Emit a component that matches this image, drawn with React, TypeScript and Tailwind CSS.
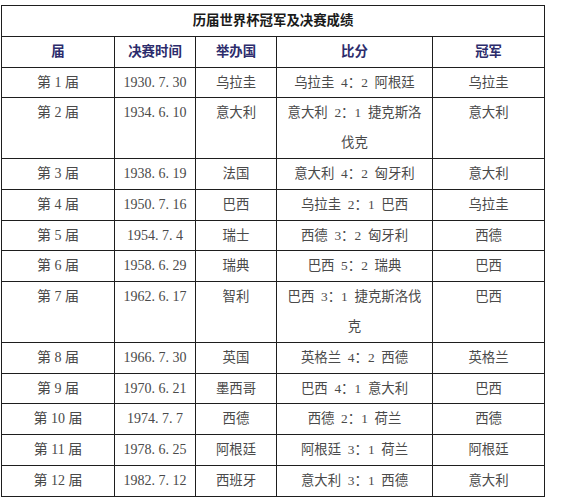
// World Cup finals history table
type Row = { no: string; date: string; host: string; score: string; champ: string }

const rows: Row[] = [
  { no: '第 1 届', date: '1930.7.30', host: '乌拉圭', score: '乌拉圭 4：2 阿根廷', champ: '乌拉圭' },
  { no: '第 2 届', date: '1934.6.10', host: '意大利', score: '意大利 2：1 捷克斯洛伐克', champ: '意大利' },
  { no: '第 3 届', date: '1938.6.19', host: '法国', score: '意大利 4：2 匈牙利', champ: '意大利' },
  { no: '第 4 届', date: '1950.7.16', host: '巴西', score: '乌拉圭 2：1 巴西', champ: '乌拉圭' },
  { no: '第 5 届', date: '1954.7.4', host: '瑞士', score: '西德 3：2 匈牙利', champ: '西德' },
  { no: '第 6 届', date: '1958.6.29', host: '瑞典', score: '巴西 5：2 瑞典', champ: '巴西' },
  { no: '第 7 届', date: '1962.6.17', host: '智利', score: '巴西 3：1 捷克斯洛伐克', champ: '巴西' },
  { no: '第 8 届', date: '1966.7.30', host: '英国', score: '英格兰 4：2 西德', champ: '英格兰' },
  { no: '第 9 届', date: '1970.6.21', host: '墨西哥', score: '巴西 4：1 意大利', champ: '巴西' },
  { no: '第 10 届', date: '1974.7.7', host: '西德', score: '西德 2：1 荷兰', champ: '西德' },
  { no: '第 11 届', date: '1978.6.25', host: '阿根廷', score: '阿根廷 3：1 荷兰', champ: '阿根廷' },
  { no: '第 12 届', date: '1982.7.12', host: '西班牙', score: '意大利 3：1 西德', champ: '意大利' },
]

// SimSun-style half-width period
function DateText({ value }: { value: string }) {
  const parts = value.split('.')
  return (
    <>
      {parts.map((p, i) => (
        <span key={i}>
          {p}
          {i < parts.length - 1 && <span className="inline-block w-[0.5em] text-left">.</span>}
        </span>
      ))}
    </>
  )
}

const cell = 'border border-[#1e1e1e] text-center p-0'
const body = `${cell} align-top`
const head = `${cell} align-middle font-bold text-[#2c2c6c]`

export default function App() {
  return (
    <div
      className="w-[574px] h-[500px] overflow-hidden bg-white pt-[5px] pl-px"
      style={{ fontFamily: '"Liberation Serif", "Noto Sans CJK SC", serif' }}
    >
      <table className="table-fixed border-collapse w-[543px] text-[13.4px] leading-[29.8px] text-[#4a4a4a]">
        <colgroup>
          <col className="w-[113px]" />
          <col className="w-[81px]" />
          <col className="w-[81px]" />
          <col className="w-[156px]" />
          <col className="w-[112px]" />
        </colgroup>
        <thead>
          <tr>
            <th colSpan={5} className={`${cell} align-middle font-bold text-[#1a1a1a]`}>
              历届世界杯冠军及决赛成绩
            </th>
          </tr>
          <tr>
            <th className={head}>届</th>
            <th className={head}>决赛时间</th>
            <th className={head}>举办国</th>
            <th className={head}>比分</th>
            <th className={head}>冠军</th>
          </tr>
        </thead>
        <tbody>
          {rows.map((r) => (
            <tr key={r.no}>
              <td className={`${body} text-[14px]`}>{r.no}</td>
              <td className={`${body} text-[14px]`}>
                <DateText value={r.date} />
              </td>
              <td className={body}>{r.host}</td>
              <td className={`${body} px-[7px] [word-spacing:0.25em]`}>{r.score}</td>
              <td className={body}>{r.champ}</td>
            </tr>
          ))}
        </tbody>
      </table>
    </div>
  )
}
